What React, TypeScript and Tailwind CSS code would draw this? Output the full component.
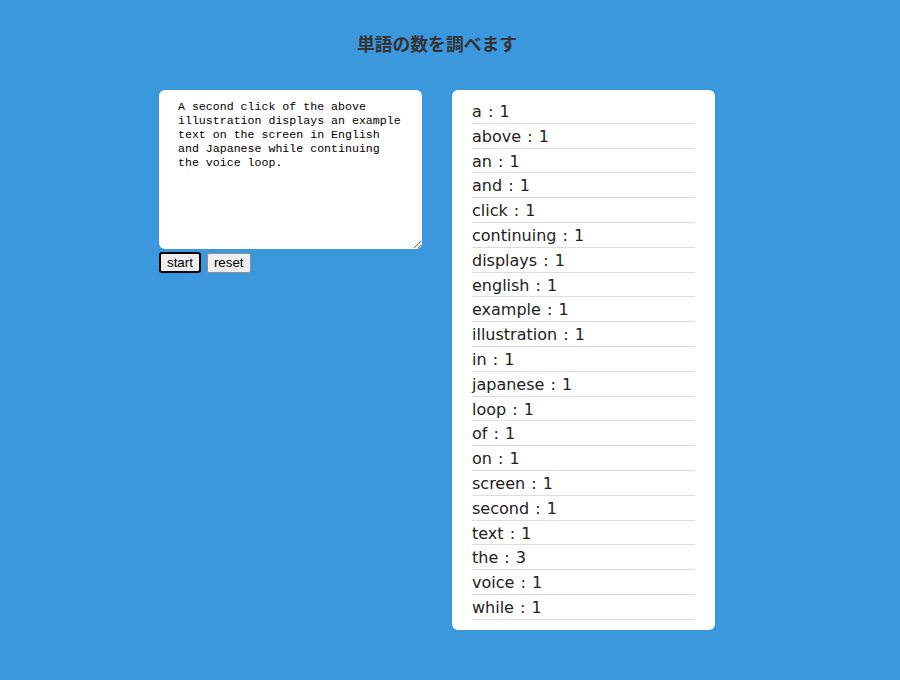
const text =
  'A second click of the above illustration displays an example text on the screen in English and Japanese while continuing the voice loop.'

function countWords(src: string) {
  const counts: Record<string, number> = {}
  src
    .toLowerCase()
    .replace(/[^a-z\s]/g, '')
    .split(/\s+/)
    .filter(Boolean)
    .forEach((w) => {
      counts[w] = (counts[w] || 0) + 1
    })
  return Object.keys(counts)
    .sort()
    .map((w) => ({ word: w, count: counts[w] }))
}

export default function App() {
  const words = countWords(text)

  return (
    <div className="min-h-[680px] w-full bg-[#3c98dd] pt-[31px]" style={{ fontFamily: '"DejaVu Sans", "Noto Sans CJK JP", sans-serif' }}>
      <div className="ml-[159px] w-[556px]">
        <h1
          className="text-center text-[17.8px] font-bold leading-[24px] text-[#333]"
          style={{ fontFamily: '"Noto Sans CJK JP", sans-serif' }}
        >
          単語の数を調べます
        </h1>

        <div className="mt-[35px] flex items-start gap-[30px]">
          {/* input */}
          <div className="flex w-[263px] flex-col">
            <textarea
              readOnly
              value={text}
              className="h-[159px] w-full resize-y rounded-[6px] bg-white px-[19px] pb-[9px] pt-[10px] text-[11.6px] leading-[14px] text-black outline-none"
              style={{ fontFamily: '"Liberation Mono", monospace' }}
            />
            <div className="mt-[3px] flex gap-[6px]">
              <button
                className="h-[21px] rounded-[3px] border-2 border-black bg-[#efefef] px-[6px] text-[13.33px] leading-none text-black"
                style={{ fontFamily: '"Liberation Sans", Arial, sans-serif' }}
              >
                start
              </button>
              <button
                className="mt-[1px] h-[20px] rounded-[2px] border border-[#8f8f8f] bg-[#efefef] px-[6px] text-[13.33px] leading-none text-black"
                style={{ fontFamily: '"Liberation Sans", Arial, sans-serif' }}
              >
                reset
              </button>
            </div>
          </div>

          {/* result */}
          <div className="w-[263px] rounded-[6px] bg-white px-[20px] pb-[10px] pt-[9px]">
            <ul>
              {words.map((w) => (
                <li
                  key={w.word}
                  className="border-b border-[#dddddd] pt-[2px] text-[16px] leading-[21.8px] text-[#222] [word-spacing:1px]"
                >
                  {w.word} : {w.count}
                </li>
              ))}
            </ul>
          </div>
        </div>
      </div>
    </div>
  )
}
